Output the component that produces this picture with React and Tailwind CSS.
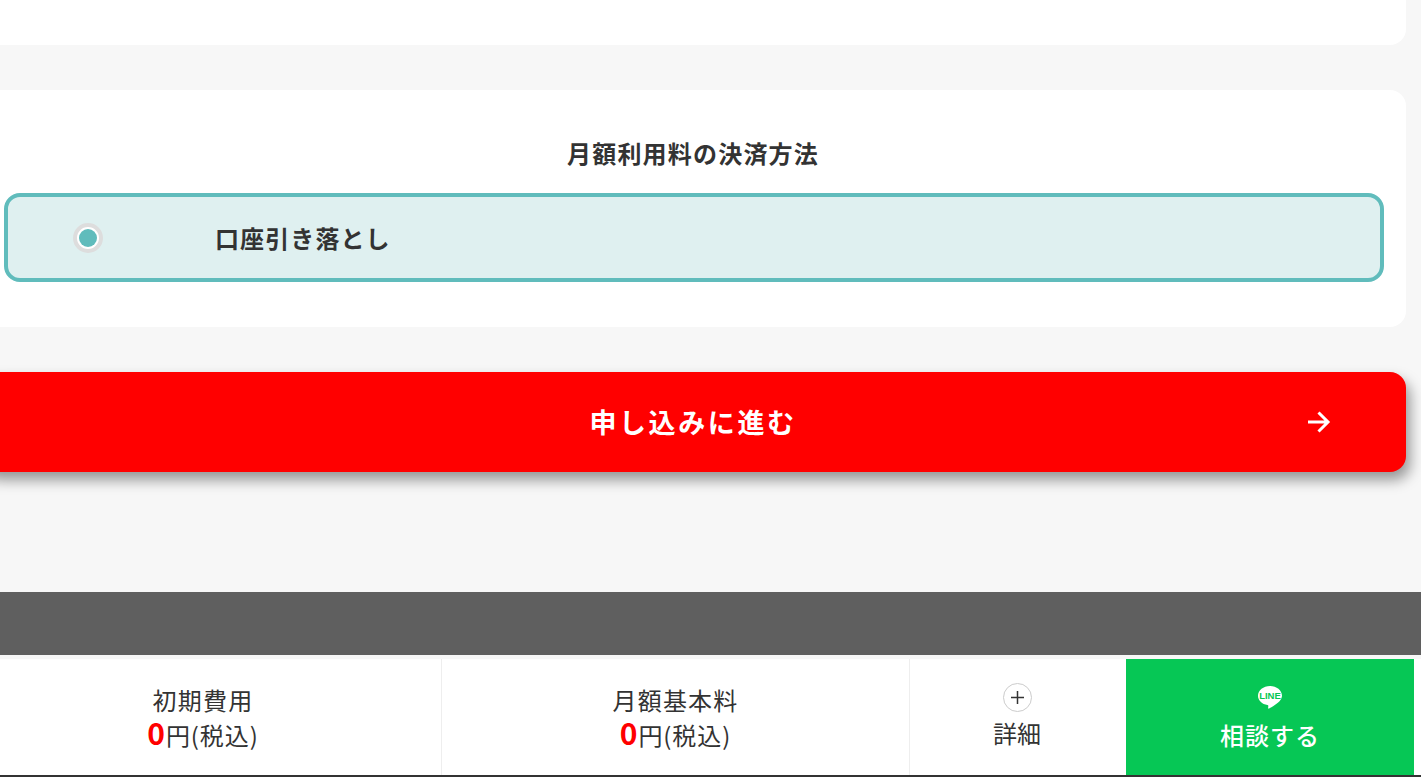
import React from "react";

const jp = "font-['Noto_Sans_CJK_JP','Noto_Sans',sans-serif]";

const LineIcon = () => (
  <svg width="26" height="26" viewBox="0 0 26 26">
    <path
      d="M13 1C6.400 1 1 5.300 1 10.800c0 4.700 4 8.500 9.500 9.300.7.200.9.500.8 1.100l-.2 1.800c0 .5.300.9 1 .5 3.300-2 10.900-6.300 12.200-10.100.4-.8.700-1.700.700-2.600C25 5.300 19.600 1 13 1z"
      fill="#fff"
    />
    <text x="13" y="14" textAnchor="middle" fontSize="9.500" fontWeight="800" fill="#06c755" fontFamily="Liberation Sans, sans-serif">
      LINE
    </text>
  </svg>
);

const Price = ({ label, className }) => (
  <div className={`flex flex-col items-center border-r border-[#eeeeee] h-full pt-[25px] ${className}`}>
    <span className="text-[24px] leading-[32px] tracking-[1.200px] text-[#333333]">{label}</span>
    <span className="text-[24px] leading-[33px] tracking-[0.900px] text-[#333333] flex items-baseline">
      <b className="text-[30px] leading-[33px] font-bold text-[#ff0000]">0</b>円(税込)
    </span>
  </div>
);

const App = () => {
  return (
    <div className={`${jp} h-[777px] w-full overflow-hidden bg-[#f7f7f7] flex flex-col`}>
      <div className="-ml-5 w-[1426px] flex flex-col gap-[45px]">
        <div className="h-[45px] bg-white rounded-b-2xl"></div>

        {/* payment method */}
        <div className="h-[237px] bg-white rounded-2xl flex flex-col items-center pt-[45px]">
          <h2 className="text-[24px] leading-[36px] font-bold tracking-[1.200px] text-[#333333]">月額利用料の決済方法</h2>
          <div className="mt-[22px] ml-[2px] w-[1380px] h-[89px] border-4 border-[#60bcbc] bg-[#dff0f0] rounded-[16px] flex items-center pl-[65px]">
            <span className="w-[30px] h-[30px] rounded-full border-4 border-[#dddddd] bg-white flex items-center justify-center shrink-0">
              <span className="w-[18px] h-[18px] rounded-full bg-[#60bcbc]"></span>
            </span>
            <span className="ml-[112px] text-[24px] font-bold tracking-[1.100px] text-[#333333]">口座引き落とし</span>
          </div>
        </div>

        {/* submit */}
        <button className="relative h-[100px] bg-[#ff0000] rounded-2xl shadow-[4px_8px_14px_rgba(0,0,0,0.4)] flex items-center justify-center">
          <span className="text-[27px] font-bold tracking-[2.600px] text-white">申し込みに進む</span>
          <svg className="absolute right-[74px] top-[38px]" width="26" height="24" viewBox="0 0 26 24" fill="none" stroke="#fff" strokeWidth="3">
            <path d="M2 12h20M12.500 2.500 22 12 12.500 21.500" />
          </svg>
        </button>
      </div>

      <div className="mt-[120px] h-[63px] bg-[#5f5f5f] shrink-0"></div>
      <div className="h-[4px] bg-[#f7f7f7] shrink-0"></div>

      {/* fixed bar */}
      <div className="h-[116px] bg-white shrink-0 flex pr-[7px]">
        <Price label="初期費用" className="w-[442px] pr-[35px]" />
        <Price label="月額基本料" className="w-[468px]" />
        <div className="w-[216px] flex flex-col items-center pt-[24px]">
          <span className="w-[29px] h-[29px] rounded-full border border-[#cccccc] flex items-center justify-center -ml-[2px]">
            <svg width="13" height="13" viewBox="0 0 13 13" stroke="#333333" strokeWidth="1.500">
              <path d="M6.500 0v13M0 6.500h13" />
            </svg>
          </span>
          <span className="text-[24px] leading-[36px] mt-[3px] -ml-[2px] text-[#333333]">詳細</span>
        </div>
        <div className="w-[288px] bg-[#06c755] flex flex-col items-center pt-[26px]">
          <LineIcon />
          <span className="text-[24px] leading-[36px] mt-[6px] tracking-[1px] font-medium text-white">相談する</span>
        </div>
      </div>
      <div className="h-[2px] bg-[#333333] shrink-0"></div>
    </div>
  );
};

export default App;
